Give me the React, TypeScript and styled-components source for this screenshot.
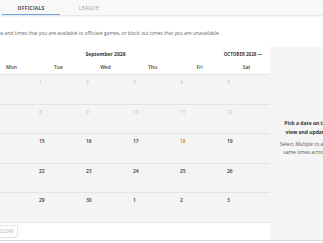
import React from "react";
import styled, { createGlobalStyle } from "styled-components";

const GlobalStyle = createGlobalStyle`
  html, body {
    margin: 0;
    padding: 0;
    background: #ffffff;
    overflow: hidden;
  }
  body {
    width: 323px;
    height: 243px;
    font-family: "Open Sans", "Liberation Sans", sans-serif;
  }
`;

type DayState = "past" | "normal" | "today";
type Day = { n: number; state: DayState };

const weeks: Day[][] = [
  [30, 31, 1, 2, 3, 4, 5],
  [6, 7, 8, 9, 10, 11, 12],
  [13, 14, 15, 16, 17, 18, 19],
  [20, 21, 22, 23, 24, 25, 26],
  [27, 28, 29, 30, 1, 2, 3],
].map((week, w) =>
  week.map((n, i) => {
    if (w === 0 && i < 2) return { n: 0, state: "past" as DayState };
    if (w < 2) return { n, state: "past" as DayState };
    if (w === 2 && n === 18) return { n, state: "today" as DayState };
    return { n, state: "normal" as DayState };
  })
);

const dayNames = ["Sun", "Mon", "Tue", "Wed", "Thu", "Fri", "Sat"];

export default function App() {
  return (
    <>
      <GlobalStyle />
      <TabBar>
        <Tab $active>OFFICIALS</Tab>
        <Tab>LEAGUE</Tab>
      </TabBar>
      <Scrolled>
        <Description>
          Select dates and times that you are available to officiate games, or block out times that you are unavailable.
        </Description>
        <Main>
          <Calendar>
            <MonthHeader>
              <MonthNav>— AUGUST 2026</MonthNav>
              <MonthTitle>September 2026</MonthTitle>
              <MonthNav $right>OCTOBER 2026 —</MonthNav>
            </MonthHeader>
            <DayNames>
              {dayNames.map((d) => (
                <DayName key={d}>{d}</DayName>
              ))}
            </DayNames>
            {weeks.map((week, w) => (
              <Week key={w}>
                {week.map((day, i) => (
                  <Cell key={i}>
                    {day.n > 0 && <DayNumber $state={day.state}>{day.n}</DayNumber>}
                  </Cell>
                ))}
              </Week>
            ))}
            <Actions>
              <ClearButton>CLEAR</ClearButton>
            </Actions>
          </Calendar>
          <Panel>
            <PanelTitle>
              Pick a date on the calendar to
              <br />
              view and update availability.
            </PanelTitle>
            <PanelText>
              Select <em>Multiple</em> to assign or clear the
              <br />
              same times across several dates.
            </PanelText>
          </Panel>
        </Main>
      </Scrolled>
    </>
  );
}

const TabBar = styled.div`
  display: flex;
  height: 15px;
  padding-left: 2px;
  background: #f8f8f8;
  border-bottom: 1px solid #e8e8e8;
  box-shadow: 0 1px 1px rgba(0, 0, 0, 0.04);
`;

const Tab = styled.div<{ $active?: boolean }>`
  width: 58px;
  display: flex;
  align-items: center;
  justify-content: center;
  box-sizing: border-box;
  padding-top: 1px;
  font-size: 5px;
  font-weight: ${(p) => (p.$active ? 700 : 400)};
  color: ${(p) => (p.$active ? "#4a4a4a" : "#9a9a9a")};
  letter-spacing: 0.2px;
  border-bottom: 1px solid ${(p) => (p.$active ? "#6aa6e0" : "transparent")};
`;

const Scrolled = styled.div`
  margin-left: -59px;
`;

const Description = styled.div`
  margin-top: 14px;
  padding-left: 35px;
  height: 17px;
  font-size: 4.9px;
  line-height: 7px;
  color: #666;
  white-space: nowrap;
`;

const Main = styled.div`
  display: flex;
  border-bottom: 1px solid #d9d9d9;
`;

const Calendar = styled.div`
  width: 329px;
  flex-shrink: 0;
`;

const MonthHeader = styled.div`
  height: 13px;
  display: grid;
  grid-template-columns: 1fr auto 1fr;
  align-items: center;
  padding: 0 8px;
`;

const MonthNav = styled.div<{ $right?: boolean }>`
  font-size: 4.5px;
  font-weight: 700;
  color: #3a3a3a;
  text-align: ${(p) => (p.$right ? "right" : "left")};
`;

const MonthTitle = styled.div`
  font-size: 5px;
  font-weight: 700;
  color: #333;
`;

const DayNames = styled.div`
  display: grid;
  grid-template-columns: repeat(7, 47px);
  height: 14px;
  align-items: center;
  border-bottom: 1px solid #e6e6e6;
`;

const DayName = styled.div`
  text-align: center;
  font-size: 5px;
  font-weight: 600;
  color: #444;
`;

const Week = styled.div`
  display: grid;
  grid-template-columns: repeat(7, 47px);
  height: 29.5px;
  box-sizing: border-box;
  background: #f4f4f4;
  border-bottom: 1px solid #e4e4e4;
`;

const Cell = styled.div`
  padding: 4px 0 0 4px;
`;

const DayNumber = styled.span<{ $state: DayState }>`
  display: block;
  font-size: 5px;
  line-height: 6px;
  font-weight: ${(p) => (p.$state === "past" ? 400 : 600)};
  color: ${(p) =>
    p.$state === "past" ? "#bdbdbd" : p.$state === "today" ? "#e07b2c" : "#333"};
`;

const Actions = styled.div`
  height: 17px;
  display: flex;
  align-items: center;
  padding-left: 55px;
`;

const ClearButton = styled.button`
  height: 13px;
  padding: 0 3px;
  border: 1px solid #e2e2e2;
  border-radius: 2px;
  background: #fff;
  font-family: inherit;
  font-size: 4.5px;
  font-weight: 600;
  color: #c2c2c2;
`;

const Panel = styled.div`
  width: 103px;
  flex-shrink: 0;
  display: flex;
  flex-direction: column;
  align-items: center;
  justify-content: center;
  background: #f5f5f5;
  text-align: center;
  white-space: nowrap;
  padding-bottom: 11px;
`;

const PanelTitle = styled.div`
  font-size: 5px;
  line-height: 9px;
  font-weight: 700;
  color: #333;
  margin-bottom: 3px;
`;

const PanelText = styled.div`
  font-size: 5px;
  line-height: 8.6px;
  color: #555;
`;
